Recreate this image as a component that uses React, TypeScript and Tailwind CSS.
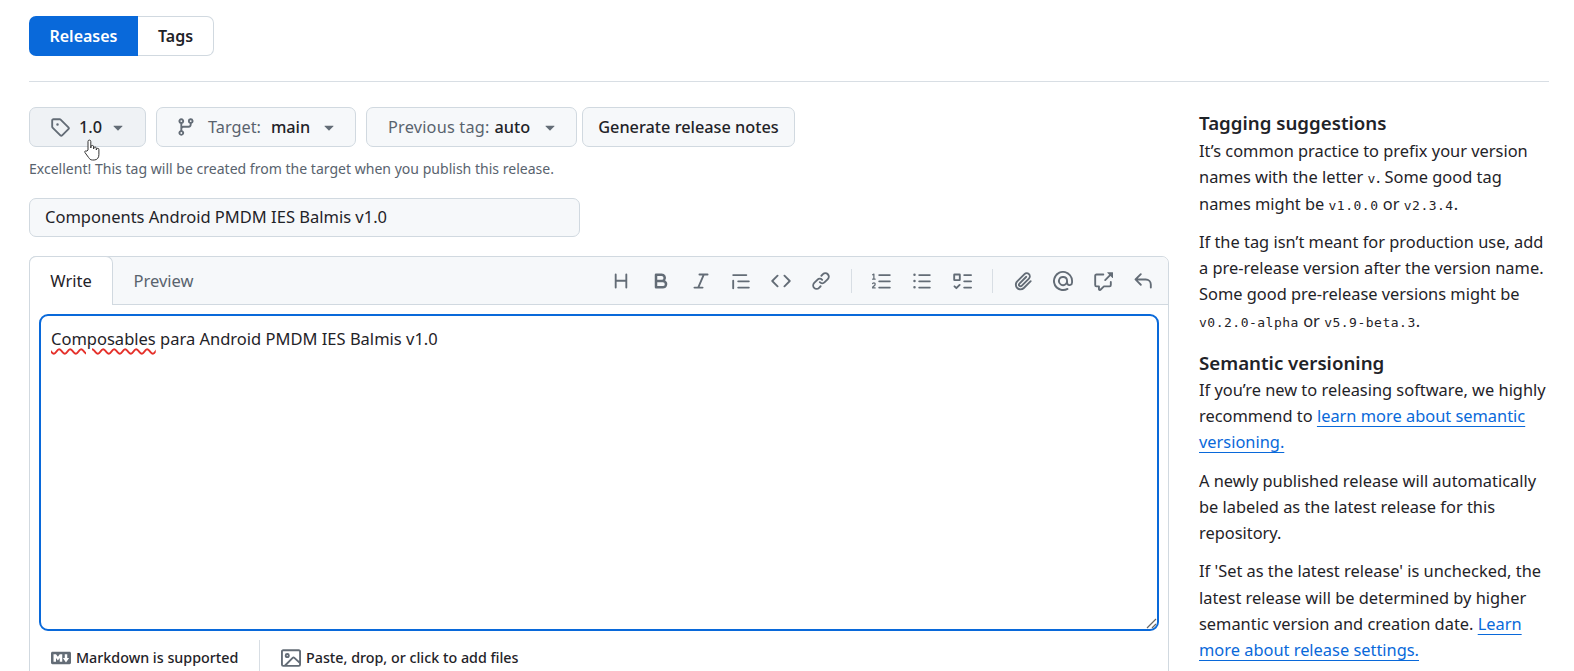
import React from "react";

const P: Record<string, string> = {
  tag: "M1 7.775V2.75C1 1.784 1.784 1 2.75 1h5.025c.464 0 .91.184 1.238.513l6.25 6.25a1.75 1.75 0 0 1 0 2.474l-5.026 5.026a1.75 1.75 0 0 1-2.474 0l-6.25-6.25A1.752 1.752 0 0 1 1 7.775Zm1.5 0c0 .066.026.13.073.177l6.25 6.25a.25.25 0 0 0 .354 0l5.025-5.025a.25.25 0 0 0 0-.354l-6.25-6.25a.25.25 0 0 0-.177-.073H2.75a.25.25 0 0 0-.25.25ZM6 5a1 1 0 1 1 0 2 1 1 0 0 1 0-2Z",
  branch: "M9.5 3.25a2.25 2.25 0 1 1 3 2.122V6A2.5 2.5 0 0 1 10 8.5H6a1 1 0 0 0-1 1v1.128a2.251 2.251 0 1 1-1.5 0V5.372a2.25 2.25 0 1 1 1.5 0v1.836A2.493 2.493 0 0 1 6 7h4a1 1 0 0 0 1-1v-.628A2.25 2.25 0 0 1 9.5 3.25Zm-6 0a.75.75 0 1 0 1.5 0 .75.75 0 0 0-1.5 0Zm8.25-.75a.75.75 0 1 0 0 1.5.75.75 0 0 0 0-1.5ZM4.25 12a.75.75 0 1 0 0 1.5.75.75 0 0 0 0-1.5Z",
  heading: "M3.75 2a.75.75 0 0 1 .75.75V7h7V2.75a.75.75 0 0 1 1.5 0v10.5a.75.75 0 0 1-1.5 0V8.5h-7v4.75a.75.75 0 0 1-1.5 0V2.75A.75.75 0 0 1 3.75 2Z",
  bold: "M4 2h4.5a3.501 3.501 0 0 1 2.852 5.53A3.499 3.499 0 0 1 9.5 14H4a1 1 0 0 1-1-1V3a1 1 0 0 1 1-1Zm1 7v3h4.5a1.5 1.5 0 0 0 0-3Zm3.5-2a1.5 1.5 0 0 0 0-3H5v3Z",
  italic: "M6 2.75A.75.75 0 0 1 6.75 2h6.5a.75.75 0 0 1 0 1.5h-2.505l-3.858 9H9.25a.75.75 0 0 1 0 1.5h-6.5a.75.75 0 0 1 0-1.5h2.505l3.858-9H6.75A.75.75 0 0 1 6 2.75Z",
  quote: "M1.75 2.5h10.5a.75.75 0 0 1 0 1.5H1.75a.75.75 0 0 1 0-1.5Zm4 5h8.5a.75.75 0 0 1 0 1.5h-8.5a.75.75 0 0 1 0-1.5Zm0 5h8.5a.75.75 0 0 1 0 1.5h-8.5a.75.75 0 0 1 0-1.5ZM2.5 7.75v6a.75.75 0 0 1-1.5 0v-6a.75.75 0 0 1 1.5 0Z",
  code: "m11.28 3.22 4.25 4.25a.75.75 0 0 1 0 1.06l-4.25 4.25a.749.749 0 0 1-1.275-.326.749.749 0 0 1 .215-.734L13.94 8l-3.72-3.72a.749.749 0 0 1 .326-1.275.749.749 0 0 1 .734.215Zm-6.56 0a.751.751 0 0 1 1.042.018.751.751 0 0 1 .018 1.042L2.06 8l3.72 3.72a.749.749 0 0 1-.326 1.275.749.749 0 0 1-.734-.215L.47 8.53a.75.75 0 0 1 0-1.06Z",
  link: "m7.775 3.275 1.25-1.25a3.5 3.5 0 1 1 4.95 4.95l-2.5 2.5a3.5 3.5 0 0 1-4.95 0 .751.751 0 0 1 .018-1.042.751.751 0 0 1 1.042-.018 1.998 1.998 0 0 0 2.83 0l2.5-2.5a2.002 2.002 0 0 0-2.83-2.83l-1.25 1.25a.751.751 0 0 1-1.042-.018.751.751 0 0 1-.018-1.042Zm-4.69 9.64a1.998 1.998 0 0 0 2.83 0l1.25-1.25a.751.751 0 0 1 1.042.018.751.751 0 0 1 .018 1.042l-1.25 1.25a3.5 3.5 0 1 1-4.95-4.95l2.5-2.5a3.5 3.5 0 0 1 4.95 0 .751.751 0 0 1-.018 1.042.751.751 0 0 1-1.042.018 1.998 1.998 0 0 0-2.83 0l-2.5 2.5a1.998 1.998 0 0 0 0 2.83Z",
  ol: "M5 3.25a.75.75 0 0 1 .75-.75h8.5a.75.75 0 0 1 0 1.5h-8.5A.75.75 0 0 1 5 3.25Zm0 5a.75.75 0 0 1 .75-.75h8.5a.75.75 0 0 1 0 1.5h-8.5A.75.75 0 0 1 5 8.25Zm0 5a.75.75 0 0 1 .75-.75h8.5a.75.75 0 0 1 0 1.5h-8.5a.75.75 0 0 1-.75-.75ZM.924 10.32a.5.5 0 0 1-.851-.525l.001-.001.001-.002.002-.004.007-.011c.097-.144.215-.273.348-.384.228-.19.588-.392 1.068-.392.468 0 .858.181 1.126.484.259.294.377.673.377 1.038 0 .987-.686 1.495-1.156 1.845l-.047.035c-.303.225-.522.4-.654.597h1.357a.5.5 0 0 1 0 1H.5a.5.5 0 0 1-.5-.5c0-1.005.692-1.52 1.167-1.875l.035-.025c.531-.396.8-.625.8-1.078a.57.57 0 0 0-.128-.376C1.806 10.068 1.695 10 1.5 10a.658.658 0 0 0-.429.163.835.835 0 0 0-.144.153ZM2.003 2.5V6h.503a.5.5 0 0 1 0 1H.5a.5.5 0 0 1 0-1h.503V3.308l-.28.14a.5.5 0 0 1-.446-.895l1.003-.5a.5.5 0 0 1 .723.447Z",
  ul: "M5.75 2.5h8.5a.75.75 0 0 1 0 1.5h-8.5a.75.75 0 0 1 0-1.5Zm0 5h8.5a.75.75 0 0 1 0 1.5h-8.5a.75.75 0 0 1 0-1.5Zm0 5h8.5a.75.75 0 0 1 0 1.5h-8.5a.75.75 0 0 1 0-1.5ZM2 14a1 1 0 1 1 0-2 1 1 0 0 1 0 2Zm1-6a1 1 0 1 1-2 0 1 1 0 0 1 2 0ZM2 4a1 1 0 1 1 0-2 1 1 0 0 1 0 2Z",
  task: "M2 2h4a1 1 0 0 1 1 1v4a1 1 0 0 1-1 1H2a1 1 0 0 1-1-1V3a1 1 0 0 1 1-1Zm4.655 8.595a.75.75 0 0 1 0 1.06L4.03 14.28a.75.75 0 0 1-1.06 0l-1.5-1.5a.749.749 0 0 1 .326-1.275.749.749 0 0 1 .734.215l.97.97 2.095-2.095a.75.75 0 0 1 1.06 0ZM9.75 2.5h5.5a.75.75 0 0 1 0 1.5h-5.5a.75.75 0 0 1 0-1.5Zm0 5h5.5a.75.75 0 0 1 0 1.5h-5.5a.75.75 0 0 1 0-1.5Zm0 5h5.5a.75.75 0 0 1 0 1.5h-5.5a.75.75 0 0 1 0-1.5Zm-7.25-9v3h3v-3Z",
  clip: "M12.212 3.02a1.753 1.753 0 0 0-2.478.003l-5.83 5.83a3.007 3.007 0 0 0-.88 2.127c0 .795.315 1.551.88 2.116.567.567 1.333.89 2.126.89.79 0 1.548-.321 2.116-.89l5.48-5.48a.75.75 0 0 1 1.061 1.06l-5.48 5.48a4.492 4.492 0 0 1-3.177 1.33c-1.2 0-2.345-.487-3.187-1.33a4.483 4.483 0 0 1-1.32-3.177c0-1.195.475-2.341 1.32-3.186l5.83-5.83a3.25 3.25 0 0 1 5.553 2.297c0 .863-.343 1.691-.953 2.301L7.439 12.39c-.375.377-.884.59-1.416.593a1.998 1.998 0 0 1-1.412-.593 1.992 1.992 0 0 1 0-2.828l5.48-5.48a.751.751 0 0 1 1.042.018.751.751 0 0 1 .018 1.042l-5.48 5.48a.492.492 0 0 0 0 .707.499.499 0 0 0 .352.154.51.51 0 0 0 .356-.154l5.833-5.827a1.755 1.755 0 0 0 0-2.481Z",
  mention: "M4.75 2.37a6.501 6.501 0 0 0 6.5 11.26.75.75 0 0 1 .75 1.298A7.999 7.999 0 0 1 .989 4.148 8 8 0 0 1 16 7.75v1.5a2.75 2.75 0 0 1-5.072 1.475 3.999 3.999 0 0 1-6.65-4.19A4 4 0 0 1 12 8v1.25a1.25 1.25 0 0 0 2.5 0V7.867a6.5 6.5 0 0 0-9.75-5.496ZM10.5 8a2.5 2.5 0 1 0-5 0 2.5 2.5 0 0 0 5 0Z",
  xref: "M2.75 3.5a.25.25 0 0 0-.25.25v7.5c0 .138.112.25.25.25h2a.75.75 0 0 1 .75.75v2.19l2.72-2.72a.749.749 0 0 1 .53-.22h4.5a.25.25 0 0 0 .25-.25v-2.5a.75.75 0 0 1 1.5 0v2.5A1.75 1.75 0 0 1 13.25 13H9.06l-2.573 2.573A1.458 1.458 0 0 1 4 14.543V13H2.75A1.75 1.75 0 0 1 1 11.25v-7.5C1 2.784 1.784 2 2.75 2h5.5a.75.75 0 0 1 0 1.5ZM16 1.25v4.146a.25.25 0 0 1-.427.177L14.03 4.03l-3.75 3.75a.749.749 0 0 1-1.275-.326.749.749 0 0 1 .215-.734l3.75-3.75-1.543-1.543A.25.25 0 0 1 11.604 1h4.146a.25.25 0 0 1 .25.25Z",
  reply: "M6.78 1.97a.75.75 0 0 1 0 1.06L3.81 6h6.44A4.75 4.75 0 0 1 15 10.75v2.5a.75.75 0 0 1-1.5 0v-2.5a3.25 3.25 0 0 0-3.25-3.25H3.81l2.97 2.97a.749.749 0 0 1-.326 1.275.749.749 0 0 1-.734-.215L1.47 7.28a.75.75 0 0 1 0-1.06l4.25-4.25a.75.75 0 0 1 1.06 0Z",
  md: "M14.85 3c.63 0 1.15.52 1.14 1.15v7.7c0 .63-.51 1.15-1.15 1.15H1.15C.52 13 0 12.48 0 11.84V4.15C0 3.52.52 3 1.15 3ZM9 11V5H7L5.5 7 4 5H2v6h2V8l1.5 1.92L7 8v3Zm2.99.5L14.5 8H13V5h-2v3H9.5Z",
  image: "M16 13.25A1.75 1.75 0 0 1 14.25 15H1.75A1.75 1.75 0 0 1 0 13.25V2.75C0 1.784.784 1 1.75 1h12.5c.966 0 1.75.784 1.75 1.75ZM1.75 2.5a.25.25 0 0 0-.25.25v10.5c0 .138.112.25.25.25h.94l.03-.03 6.077-6.078a1.75 1.75 0 0 1 2.412-.06L14.5 10.31V2.75a.25.25 0 0 0-.25-.25Zm12.5 11a.25.25 0 0 0 .25-.25v-.917l-4.298-3.889a.25.25 0 0 0-.344.009L4.81 13.5ZM7 6a2 2 0 1 1-3.999.001A2 2 0 0 1 7 6ZM5.5 6a.5.5 0 1 0-1 0 .5.5 0 0 0 1 0Z",
};

function Ico({ n, s = 20, c = "text-[#636c76]" }: { n: string; s?: number; c?: string }) {
  return (
    <svg viewBox="0 0 16 16" width={s} height={s} fill="currentColor" className={`shrink-0 ${c}`}>
      <path d={P[n]} />
    </svg>
  );
}

const Caret = () => (
  <svg viewBox="0 0 16 16" width="20" height="20" fill="currentColor" className="shrink-0 text-[#636c76]">
    <path d="m4.427 7.427 3.396 3.396a.25.25 0 0 0 .354 0l3.396-3.396A.25.25 0 0 0 11.396 7H4.604a.25.25 0 0 0-.177.427Z" />
  </svg>
);

const Code = ({ children }: { children: React.ReactNode }) => (
  <code className="font-['DejaVu_Sans_Mono',monospace] text-[13px] leading-none tracking-[0.5px]">{children}</code>
);

const A = ({ children }: { children: React.ReactNode }) => (
  <a className="text-[#0969da] underline underline-offset-[4px]">{children}</a>
);

const btn = "h-[40px] flex items-center rounded-[7px] border border-[#d1d9e0]";

export default function App() {
  return (
    <div className="relative h-[671px] w-[1574px] overflow-hidden bg-white pl-[29px] pr-[25px] pt-[16px] font-['Noto_Sans',sans-serif] text-[16.5px] leading-[26.25px] text-[#1f2328]">
      <div className="flex h-[40px] w-[185px] text-[16px] font-semibold">
        <div className="flex w-[109px] items-center justify-center rounded-l-[7px] bg-[#0969da] text-white">Releases</div>
        <div className="flex flex-1 items-center justify-center rounded-r-[7px] border border-l-0 border-[#d1d9e0]">Tags</div>
      </div>
      <div className="mt-[25px] h-px bg-[#d8dee4]" />
      <div className="mt-[25px] flex gap-[29px]">
        <div className="w-[1141px] shrink-0">
          <div className="flex text-[16.3px]">
            <div className={`${btn} relative w-[117px] bg-[#eff2f5] pl-[20px]`}>
              <Ico n="tag" />
              <span className="ml-[9px] font-medium">1.0</span>
              <span className="ml-[6px]"><Caret /></span>
              <svg viewBox="0 0 18 24" width="18" height="24" className="absolute left-[53px] top-[30px]">
                <path d="M5 12V3.5a1.4 1.4 0 0 1 2.8 0V10l.2-1.4a1.3 1.3 0 0 1 2.6.3V11l.2-1.2a1.3 1.3 0 0 1 2.5.4V12l.3-1a1.2 1.2 0 0 1 2.3.5v5.2c0 2.8-1.6 5.3-4.7 5.3H9.5c-2 0-3-1-4-2.6L2 14.6c-.8-1.3.8-2.5 1.9-1.4Z" fill="#fff" stroke="#333" strokeWidth="1" strokeLinejoin="round" />
              </svg>
            </div>
            <div className={`${btn} ml-[10px] w-[200px] bg-[#f6f8fa] pl-[19px] text-[#59636e]`}>
              <Ico n="branch" />
              <span className="ml-[12px]">Target:</span>
              <span className="ml-[10px] font-medium text-[#1f2328]">main</span>
              <span className="ml-[9px]"><Caret /></span>
            </div>
            <div className={`${btn} ml-[10px] w-[211px] bg-[#f6f8fa] pl-[21px] text-[#59636e]`}>
              <span className="tracking-[0.2px]">Previous tag:</span>
              <span className="ml-[5px] font-medium text-[#1f2328]">auto</span>
              <span className="ml-[10px]"><Caret /></span>
            </div>
            <div className={`${btn} ml-[5px] w-[213px] justify-center bg-[#f6f8fa] font-medium`}>Generate release notes</div>
          </div>
          <p className="mt-[9px] text-[14.05px] leading-[26px] text-[#59636e]">
            Excellent! This tag will be created from the target when you publish this release.
          </p>
          <div className="mt-[16px] flex h-[39px] w-[551px] items-center rounded-[7px] border border-[#d1d9e0] bg-[#f6f8fa] pl-[15px]">
            Components Android PMDM IES Balmis v1.0
          </div>
          <div className="mt-[19px] h-[500px] w-[1140px] rounded-t-[7px] border border-[#d1d9e0]">
            <div className="flex h-[48px] items-stretch rounded-t-[7px] border-b border-[#d1d9e0] bg-[#f6f8fa]">
              <div className="-mb-px -ml-px -mt-px flex w-[84px] items-center justify-center rounded-t-[7px] border border-b-0 border-[#d1d9e0] bg-white">Write</div>
              <div className="flex w-[101px] items-center justify-center pt-[1px] text-[#59636e]">Preview</div>
              <div className="ml-auto flex items-center pr-[5px]">
                {["heading", "bold", "italic", "quote", "code", "link"].map((n) => (
                  <span key={n} className="flex w-[40px] justify-center"><Ico n={n} /></span>
                ))}
                <span className="mx-[10px] h-[24px] w-px bg-[#d8dee4]" />
                {["ol", "ul", "task"].map((n) => (
                  <span key={n} className="flex w-[40px] justify-center"><Ico n={n} /></span>
                ))}
                <span className="mx-[10px] h-[24px] w-px bg-[#d8dee4]" />
                {["clip", "mention", "xref", "reply"].map((n) => (
                  <span key={n} className="flex w-[40px] justify-center"><Ico n={n} /></span>
                ))}
              </div>
            </div>
            <div className="px-[9px] pt-[9px]">
              <div className="relative h-[317px] rounded-[9px] border-2 border-[#0969da] px-[10px] py-[10px]">
                <span className="underline decoration-[#e5302a] decoration-wavy decoration-[1.5px] underline-offset-[3px]">Composables</span> para Android PMDM IES Balmis v1.0
                <svg viewBox="0 0 12 12" width="12" height="12" className="absolute bottom-0 right-0" stroke="#666" strokeWidth="1.2">
                  <path d="M2 11 11 2M7 11l4-4" />
                </svg>
              </div>
            </div>
            <div className="mt-[9px] flex h-[40px] text-[14.3px] font-medium text-[#1f2328]">
              <div className="flex w-[230px] items-start gap-[5px] border-r border-[#d8dee4] pl-[21px] pt-[5px]">
                <span className="pt-[3px]"><Ico n="md" /></span>
                Markdown is supported
              </div>
              <div className="flex items-start gap-[5px] pl-[21px] pt-[5px]">
                <span className="pt-[3px]"><Ico n="image" /></span>
                Paste, drop, or click to add files
              </div>
            </div>
          </div>
        </div>
        <div className="w-[350px] shrink-0 pt-[2px] text-[16.4px] text-[#1f2328]">
          <h3 className="mb-[2px] text-[18.7px] font-semibold leading-[27px]">Tagging suggestions</h3>
          <p>
            It’s common practice to prefix your version<br />names with the letter <Code>v</Code>. Some good tag<br />names might be <Code>v1.0.0</Code> or <Code>v2.3.4</Code>.
          </p>
          <p className="mt-[12px]">
            If the tag isn’t meant for production use, add<br />a pre-release version after the version name.<br />Some good pre-release versions might be<br /><Code>v0.2.0-alpha</Code> or <Code>v5.9-beta.3</Code>.
          </p>
          <h3 className="mb-[1px] mt-[15px] text-[18.7px] font-semibold leading-[27px]">Semantic versioning</h3>
          <p>
            If you’re new to releasing software, we highly<br />recommend to <A>learn more about semantic<br />versioning.</A>
          </p>
          <p className="mt-[12px]">
            A newly published release will automatically<br />be labeled as the latest release for this<br />repository.
          </p>
          <p className="mt-[12px]">
            If 'Set as the latest release' is unchecked, the<br />latest release will be determined by higher<br />semantic version and creation date. <A>Learn<br />more about release settings.</A>
          </p>
        </div>
      </div>
    </div>
  );
}
